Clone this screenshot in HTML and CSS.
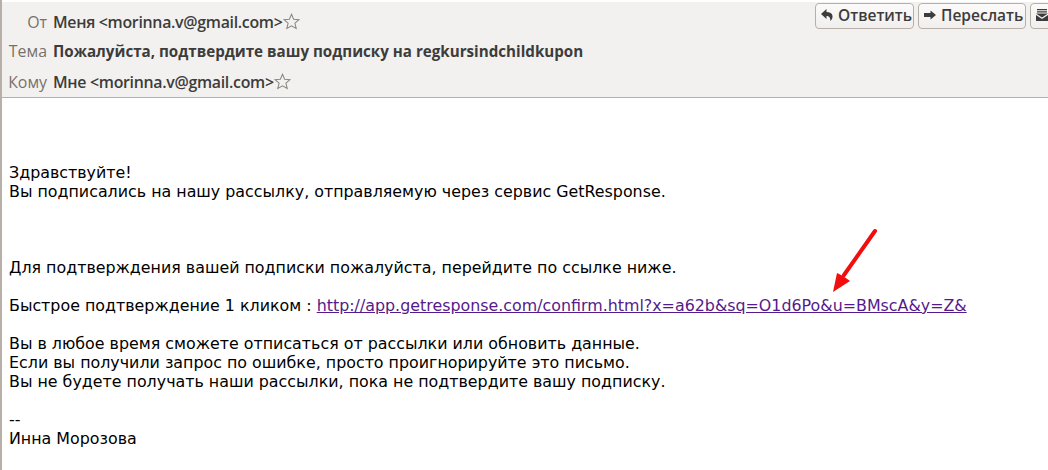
FILE: index.html
```html
<!DOCTYPE html>
<html lang="ru">
<head>
<meta charset="utf-8">
<title>Письмо</title>
<link rel="stylesheet" href="styles.css">
</head>
<body>
<div class="window">
  <header class="head">
    <div class="rows">
      <div class="row row-from"><span class="label">От</span><span class="value">Меня &lt;morinna.v@gmail.com&gt;</span><svg class="star" viewBox="0 0 16 16"><path d="M8 1.2l2 4.6 5 .5-3.8 3.3 1.2 4.9L8 12l-4.400 2.500 1.200-4.900L1 6.300l5-.5z"/></svg></div>
      <div class="row row-subj"><span class="label">Тема</span><span class="value subject">Пожалуйста, подтвердите вашу подписку на regkursindchildkupon</span></div>
      <div class="row row-to"><span class="label">Кому</span><span class="value">Мне &lt;morinna.v@gmail.com&gt;</span><svg class="star" viewBox="0 0 16 16"><path d="M8 1.2l2 4.6 5 .5-3.8 3.3 1.2 4.9L8 12l-4.400 2.500 1.200-4.900L1 6.300l5-.5z"/></svg></div>
    </div>
    <div class="actions">
      <button class="btn btn-reply"><svg class="ico" viewBox="0 0 14 14"><path d="M6.500 1L1 6l5.500 5V8c2.300 0 3.700.8 4 5 1.500-1.500 2.300-3.300 2-5.300C12.100 5.200 9.800 4 6.500 4z"/></svg>Ответить</button>
      <button class="btn btn-fwd"><svg class="ico" viewBox="0 0 14 14"><path d="M7.500 2.500L13 7l-5.500 4.500V9H1V5h6.500z"/></svg>Переслать</button>
      <button class="btn btn-cut"><svg class="ico" viewBox="0 0 14 14"><path d="M2 1h10v1.200H2zM2 3.200h10v1.200H2zM1 5.500h12L7 9.500zM1 7v6h12V7L7 11z"/></svg></button>
    </div>
  </header>
  <main class="mail">
    <p class="para">Здравствуйте!<br>Вы подписались на нашу рассылку, отправляемую через сервис GetResponse.</p>
    <p class="para para-gap">Для подтверждения вашей подписки пожалуйста, перейдите по ссылке ниже.</p>
    <p class="para para-one">Быстрое подтверждение 1 кликом : <a class="link" href="#">http://app.getresponse.com/confirm.html?x=a62b&amp;sq=O1d6Po&amp;u=BMscA&amp;y=Z&amp;</a></p>
    <p class="para para-one">Вы в любое время сможете отписаться от рассылки или обновить данные.<br>Если вы получили запрос по ошибке, просто проигнорируйте это письмо.<br>Вы не будете получать наши рассылки, пока не подтвердите вашу подписку.</p>
    <p class="para para-one">--<br>Инна Морозова</p>
    <svg class="arrow" viewBox="0 0 50 68"><path d="M45 3L14 47" stroke="#f00e0e" stroke-width="4" stroke-linecap="round" fill="none"/><path d="M3 64L7 45 13 48 20 53z" fill="#f00e0e"/></svg>
  </main>
</div>
</body>
</html>
```
FILE: styles.css
```css
html, body {
  margin: 0;
  padding: 0;
  background: #fff;
}
.window {
  width: 1048px;
  height: 470px;
  box-sizing: border-box;
  border-left: 2px solid #b8b0a8;
  overflow: hidden;
  display: flex;
  flex-direction: column;
  background: #fff;
}
.head {
  height: 95px;
  margin-top: 2px;
  background: #f3f1ef;
  border-bottom: 1px solid #b8b0a8;
  display: flex;
  justify-content: space-between;
  flex-shrink: 0;
  overflow: hidden;
}
.rows {
  display: flex;
  flex-direction: column;
}
.row {
  display: flex;
  align-items: center;
  height: 22px;
  font: 600 15.900px "Open Sans", "Noto Sans", sans-serif;
  color: #3c3c3c;
}
.row-from { margin-top: 9px; }
.row-subj { margin-top: 7px; }
.row-to { margin-top: 9px; }
.label {
  width: 45px;
  text-align: right;
  margin-right: 6px;
  color: #77716b;
  font-weight: 400;
  flex-shrink: 0;
}
.value {
  white-space: nowrap;
  letter-spacing: -0.3px;
}
.subject {
  font-weight: 700;
  font-size: 15.170px;
  letter-spacing: 0;
}
.star {
  width: 17px;
  height: 17px;
  margin-top: -2px;
  fill: none;
  stroke: #8d8880;
  stroke-width: 1;
}
.actions {
  display: flex;
  gap: 4px;
  padding-top: 1px;
  margin-right: -22px;
  align-items: flex-start;
}
.btn {
  height: 26px;
  box-sizing: border-box;
  padding: 0 0 2px 4px;
  display: flex;
  align-items: center;
  gap: 4px;
  font: 600 15.500px "Open Sans", "Noto Sans", sans-serif;
  color: #3c3c3c;
  background: linear-gradient(#fbfafa, #f1efed);
  border: 1px solid #b8b0a8;
  border-radius: 4px;
  white-space: nowrap;
}
.btn-reply { width: 99px; }
.btn-fwd { width: 108px; }
.btn-cut { width: 40px; }
.ico {
  width: 14px;
  height: 14px;
  fill: #3c3c3c;
  flex-shrink: 0;
}
.mail {
  position: relative;
  flex: 1;
  padding: 65px 0 0 7px;
  font: 15.870px/19px "DejaVu Sans", sans-serif;
  color: #000;
  background: #fff;
}
.para { margin: 0; white-space: nowrap; }
.para-gap { margin-top: 57px; }
.para-one { margin-top: 19px; }
.link { color: #551a8b; }
.arrow {
  position: absolute;
  left: 828px;
  top: 130px;
  width: 50px;
  height: 68px;
}
```
